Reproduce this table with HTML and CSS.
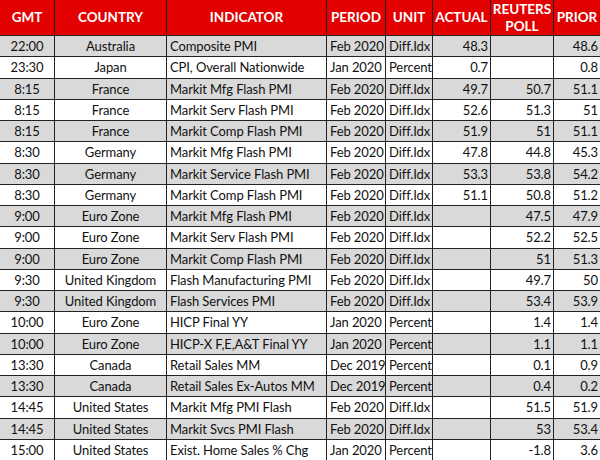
FILE: index.html
```html
<!DOCTYPE html>
<html>
<head>
<meta charset="utf-8">
<link rel="stylesheet" href="styles.css">
</head>
<body>
<table class="cal">
<colgroup>
<col class="c-gmt"><col class="c-country"><col class="c-ind"><col class="c-period"><col class="c-unit"><col class="c-actual"><col class="c-poll"><col class="c-prior">
</colgroup>
<thead>
<tr><th>GMT</th><th>COUNTRY</th><th>INDICATOR</th><th>PERIOD</th><th>UNIT</th><th>ACTUAL</th><th>REUTERS<br>POLL</th><th>PRIOR</th></tr>
</thead>
<tbody>
<tr><td class="ctr">22:00</td><td class="ctr">Australia</td><td>Composite PMI</td><td>Feb 2020</td><td>Diff.Idx</td><td class="num">48.3</td><td class="num"></td><td class="num">48.6</td></tr>
<tr><td class="ctr">23:30</td><td class="ctr">Japan</td><td>CPI, Overall Nationwide</td><td>Jan 2020</td><td>Percent</td><td class="num">0.7</td><td class="num"></td><td class="num">0.8</td></tr>
<tr><td class="ctr">8:15</td><td class="ctr">France</td><td>Markit Mfg Flash PMI</td><td>Feb 2020</td><td>Diff.Idx</td><td class="num">49.7</td><td class="num">50.7</td><td class="num">51.1</td></tr>
<tr><td class="ctr">8:15</td><td class="ctr">France</td><td>Markit Serv Flash PMI</td><td>Feb 2020</td><td>Diff.Idx</td><td class="num">52.6</td><td class="num">51.3</td><td class="num">51</td></tr>
<tr><td class="ctr">8:15</td><td class="ctr">France</td><td>Markit Comp Flash PMI</td><td>Feb 2020</td><td>Diff.Idx</td><td class="num">51.9</td><td class="num">51</td><td class="num">51.1</td></tr>
<tr><td class="ctr">8:30</td><td class="ctr">Germany</td><td>Markit Mfg Flash PMI</td><td>Feb 2020</td><td>Diff.Idx</td><td class="num">47.8</td><td class="num">44.8</td><td class="num">45.3</td></tr>
<tr><td class="ctr">8:30</td><td class="ctr">Germany</td><td>Markit Service Flash PMI</td><td>Feb 2020</td><td>Diff.Idx</td><td class="num">53.3</td><td class="num">53.8</td><td class="num">54.2</td></tr>
<tr><td class="ctr">8:30</td><td class="ctr">Germany</td><td>Markit Comp Flash PMI</td><td>Feb 2020</td><td>Diff.Idx</td><td class="num">51.1</td><td class="num">50.8</td><td class="num">51.2</td></tr>
<tr><td class="ctr">9:00</td><td class="ctr">Euro Zone</td><td>Markit Mfg Flash PMI</td><td>Feb 2020</td><td>Diff.Idx</td><td class="num"></td><td class="num">47.5</td><td class="num">47.9</td></tr>
<tr><td class="ctr">9:00</td><td class="ctr">Euro Zone</td><td>Markit Serv Flash PMI</td><td>Feb 2020</td><td>Diff.Idx</td><td class="num"></td><td class="num">52.2</td><td class="num">52.5</td></tr>
<tr><td class="ctr">9:00</td><td class="ctr">Euro Zone</td><td>Markit Comp Flash PMI</td><td>Feb 2020</td><td>Diff.Idx</td><td class="num"></td><td class="num">51</td><td class="num">51.3</td></tr>
<tr><td class="ctr">9:30</td><td class="ctr">United Kingdom</td><td>Flash Manufacturing PMI</td><td>Feb 2020</td><td>Diff.Idx</td><td class="num"></td><td class="num">49.7</td><td class="num">50</td></tr>
<tr><td class="ctr">9:30</td><td class="ctr">United Kingdom</td><td>Flash Services PMI</td><td>Feb 2020</td><td>Diff.Idx</td><td class="num"></td><td class="num">53.4</td><td class="num">53.9</td></tr>
<tr><td class="ctr">10:00</td><td class="ctr">Euro Zone</td><td>HICP Final YY</td><td>Jan 2020</td><td>Percent</td><td class="num"></td><td class="num">1.4</td><td class="num">1.4</td></tr>
<tr><td class="ctr">10:00</td><td class="ctr">Euro Zone</td><td>HICP-X F,E,A&amp;T Final YY</td><td>Jan 2020</td><td>Percent</td><td class="num"></td><td class="num">1.1</td><td class="num">1.1</td></tr>
<tr><td class="ctr">13:30</td><td class="ctr">Canada</td><td>Retail Sales MM</td><td>Dec 2019</td><td>Percent</td><td class="num"></td><td class="num">0.1</td><td class="num">0.9</td></tr>
<tr><td class="ctr">13:30</td><td class="ctr">Canada</td><td>Retail Sales Ex-Autos MM</td><td>Dec 2019</td><td>Percent</td><td class="num"></td><td class="num">0.4</td><td class="num">0.2</td></tr>
<tr><td class="ctr">14:45</td><td class="ctr">United States</td><td>Markit Mfg PMI Flash</td><td>Feb 2020</td><td>Diff.Idx</td><td class="num"></td><td class="num">51.5</td><td class="num">51.9</td></tr>
<tr><td class="ctr">14:45</td><td class="ctr">United States</td><td>Markit Svcs PMI Flash</td><td>Feb 2020</td><td>Diff.Idx</td><td class="num"></td><td class="num">53</td><td class="num">53.4</td></tr>
<tr><td class="ctr">15:00</td><td class="ctr">United States</td><td>Exist. Home Sales % Chg</td><td>Jan 2020</td><td>Percent</td><td class="num"></td><td class="num">-1.8</td><td class="num">3.6</td></tr>
</tbody>
</table>
</body>
</html>
```
FILE: styles.css
```css
html, body {
  margin: 0;
  padding: 0;
  background: #ffffff;
}
.cal {
  border-collapse: collapse;
  table-layout: fixed;
  width: 601px;
  margin-left: -1px;
  margin-top: -1px;
  font-family: Lato, "Open Sans", sans-serif;
  font-size: 13px;
  letter-spacing: -0.1px;
  color: #111;
}
.c-gmt { width: 55px; }
.c-country { width: 112px; }
.c-ind { width: 160px; }
.c-period { width: 59px; }
.c-unit { width: 47px; }
.c-actual { width: 58px; }
.c-poll { width: 63px; }
.c-prior { width: 47px; }
.cal th, .cal td {
  border: 1px solid #222;
  padding: 0 3px;
  white-space: nowrap;
  overflow: hidden;
}
.cal th {
  background: #e30000;
  color: #fff;
  font-weight: 700;
  font-size: 13.5px;
  letter-spacing: 0;
  height: 35px;
  line-height: 17px;
  text-align: center;
  padding: 0 1px;
}
.cal td {
  height: 20.25px;
  line-height: 20px;
  text-align: left;
}
.cal tbody tr:nth-child(odd) td {
  background: #d9d9d9;
}
.cal td.ctr { text-align: center; }
.cal td.num { text-align: right; padding-right: 2px; }
```
